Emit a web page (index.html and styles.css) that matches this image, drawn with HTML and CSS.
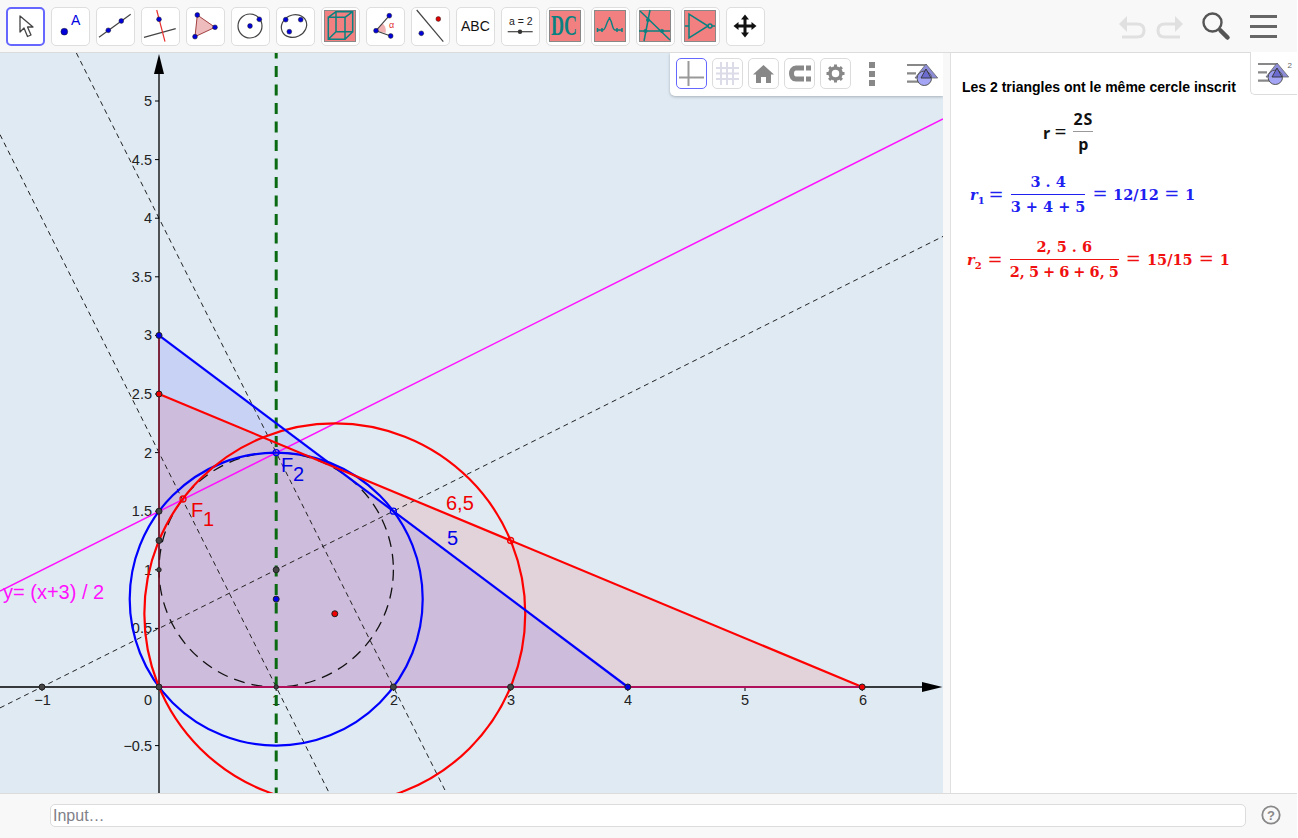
FILE: index.html
```html
<!DOCTYPE html>
<html lang="fr">
<head>
<meta charset="utf-8">
<title>Les 2 triangles</title>
<link rel="stylesheet" href="styles.css">
</head>
<body>
<svg class="defs" width="0" height="0" aria-hidden="true">
  <symbol id="stylebar" viewBox="0 0 32 23">
    <path d="M0 2h20M0 10.3h9M0 18.6h12" stroke="#888" stroke-width="2.2" fill="none"/>
    <path d="M19 1 30.7 15H8z" fill="#8c8cd8" stroke="#666" stroke-width=".8"/>
    <circle cx="17.3" cy="15.3" r="7.2" fill="#9a9cf4" fill-opacity=".9" stroke="#555" stroke-width="1"/>
    <path d="M19 6 14 15H24z" fill="#6c6cd0" stroke="#333" stroke-width=".9"/>
  </symbol>
</svg>
<div class="app">
  <header class="toolbar">
    <div class="tools">
      <button class="tool active"><svg viewBox="0 0 37 37"><path d="M13 8V24L17 20 20.500 28.500 24 27 20.500 19H26z" fill="#fff" stroke="#444" stroke-width="1.300" stroke-linejoin="round"/></svg></button>
      <button class="tool"><svg viewBox="0 0 37 37"><circle class="pt" cx="12.300" cy="23.700" r="3.400"/><text class="lbl-a" x="19" y="17">A</text></svg></button>
      <button class="tool"><svg viewBox="0 0 37 37"><path class="ln" d="M2 29.300 33.700 6.300"/><circle class="pt" cx="11.300" cy="22.300" r="2.400"/><circle class="pt" cx="24.300" cy="13" r="2.400"/></svg></button>
      <button class="tool"><svg viewBox="0 0 37 37"><path class="ln" d="M2 29.300 33.700 20.700"/><path class="ln red" d="M14.700 2 23 33.700"/><circle class="pt" cx="17" cy="11.300" r="2.400"/></svg></button>
      <button class="tool"><svg viewBox="0 0 37 37"><path d="M10.300 7 28 19.300 8 28.700z" fill="#eebcbc" stroke="#a04040" stroke-width="1"/><circle class="pt" cx="10.300" cy="7" r="2.400"/><circle class="pt" cx="28" cy="19.300" r="2.400"/><circle class="pt" cx="8" cy="28.700" r="2.400"/></svg></button>
      <button class="tool"><svg viewBox="0 0 37 37"><circle class="ln" cx="18" cy="18" r="12"/><circle class="pt" cx="18" cy="18" r="2.400"/><circle class="pt" cx="27.300" cy="11.300" r="2.400"/></svg></button>
      <button class="tool"><svg viewBox="0 0 37 37"><ellipse class="ln" cx="17" cy="18" rx="13" ry="11" transform="rotate(-25 17 18)"/><circle class="pt" cx="8.700" cy="11.700" r="2.400"/><circle class="pt" cx="23.700" cy="11.700" r="2.400"/><circle class="pt" cx="12.300" cy="23.700" r="2.400"/></svg></button>
      <button class="tool"><svg viewBox="0 0 37 37"><g transform="translate(2 2)"><rect class="custom" x=".5" y=".5" width="31" height="31"/><path class="teal thick" d="M4.300 7.300H21V29.300H4.300zM12 1.700H28.700V21.700H12zM4.300 7.300 12 1.700M21 7.300 28.700 1.700M21 29.300 28.700 21.700M4.300 29.300 12 21.700"/></g></svg></button>
      <button class="tool"><svg viewBox="0 0 37 37"><path d="M9 22.700 15.500 15.500C18 17.500 19.500 21 18.500 25z" fill="#f0b0b0"/><path class="ln" d="M22.300 7.700 9 22.700 23.700 28"/><circle class="pt" cx="9" cy="22.700" r="2.400"/><circle class="pt" cx="22.300" cy="7.700" r="2.400"/><circle class="pt" cx="23.700" cy="28" r="2.400"/><text class="alpha" x="22" y="20">α</text></svg></button>
      <button class="tool"><svg viewBox="0 0 37 37"><path class="ln" d="M4.700 2 31.300 33.700"/><circle class="pt redpt" cx="26.300" cy="11" r="2.400"/><circle class="pt" cx="9.300" cy="25.300" r="2.400"/></svg></button>
      <button class="tool"><svg viewBox="0 0 37 37"><text class="abc" x="4" y="22.700">ABC</text></svg></button>
      <button class="tool"><svg viewBox="0 0 37 37"><text class="aeq" x="7" y="16.500">a = 2</text><path class="ln" d="M5.700 23.700H30.700"/><circle cx="18" cy="23.700" r="2.200" fill="#333"/></svg></button>
      <button class="tool"><svg viewBox="0 0 37 37"><g transform="translate(2 2)"><rect class="custom" x=".5" y=".5" width="31" height="31"/><text class="dc" transform="translate(2 25) scale(1 1.600)">DC</text></g></svg></button>
      <button class="tool"><svg viewBox="0 0 37 37"><g transform="translate(2 2)"><rect class="custom" x=".5" y=".5" width="31" height="31"/><path class="teal thick" d="M3 20H9C12 20 13 9 15.500 9S18 20 21 20H28"/><path class="teal thick" d="M3.500 18v4M8 18v4M23 18v4M28 18v4M15.500 7v3"/></g></svg></button>
      <button class="tool"><svg viewBox="0 0 37 37"><g transform="translate(2 2)"><rect class="custom" x=".5" y=".5" width="31" height="31"/><path class="teal thick" d="M1 1 31 30M11 0 5 31M0 21H31"/><circle class="tealdot" cx="9" cy="10" r="2"/><circle class="tealdot" cx="6.500" cy="21" r="2"/><circle class="tealdot" cx="23" cy="21" r="2"/></g></svg></button>
      <button class="tool"><svg viewBox="0 0 37 37"><g transform="translate(2 2)"><rect class="custom" x=".5" y=".5" width="31" height="31"/><path class="teal thick" d="M5 4V28L24 16zM1 16H5"/><circle class="teal thick" cx="26" cy="16" r="2"/><path class="teal thick" d="M28 16H31"/></g></svg></button>
      <button class="tool"><svg viewBox="0 0 37 37"><path d="M18 6.500 22 11.500H19.500V16.500H24.500V14L29.500 18 24.500 22V19.500H19.500V24.500H22L18 29.500 14 24.500H16.500V19.500H11.500V22L6.500 18 11.500 14V16.500H16.500V11.500H14z" fill="#111"/></svg></button>
    </div>
    <div class="actions">
      <svg class="act undo" viewBox="0 0 28 24"><path d="M7 9H19C24 9 26 12 26 15.500S24 22 19 22H4" fill="none" stroke="#e0e0e0" stroke-width="3"/><path d="M9 1V17L1 9z" fill="#e0e0e0"/></svg>
      <svg class="act redo" viewBox="0 0 28 24"><path d="M21 9H9C4 9 2 12 2 15.500S4 22 9 22H24" fill="none" stroke="#e0e0e0" stroke-width="3"/><path d="M19 1V17L27 9z" fill="#e0e0e0"/></svg>
      <svg class="act search" viewBox="0 0 30 30"><circle cx="11.500" cy="11.500" r="9" fill="none" stroke="#555" stroke-width="2.400"/><path d="M18.500 18.500 26 26" stroke="#555" stroke-width="2"/><path d="M19.500 19.500 26.500 26.500" stroke="#555" stroke-width="4.500" stroke-linecap="round"/></svg>
      <div class="burger"><span></span><span></span><span></span></div>
    </div>
  </header>

  <main class="workspace">
    <section class="graphics">
      <svg class="plot" viewBox="0 53 943 740" width="943" height="740">
        <path d="M159 335.400 627.800 687H159z" fill="#0000ff" fill-opacity=".1"/>
        <path d="M159 394 862.200 687H159z" fill="#ff0000" fill-opacity=".1"/>

        <g class="dash">
          <path d="M0 707.900 943 236.400"/>
          <path d="M76.400 53 446.400 793"/>
          <path d="M0 134.600 329.200 793"/>
        </g>
        <circle class="incircle" cx="276.200" cy="569.800" r="117.200"/>

        <path class="axis" d="M0 687H930M159 793V68"/>
        <path d="M942.500 687 922 682V692z" fill="#000"/>
        <path d="M159 54 154 74H164z" fill="#000"/>
        <path class="tick" d="M42 687v4M276.200 687v4M393.400 687v4M510.600 687v4M627.800 687v4M745 687v4M862.200 687v4M155 745.600h4M155 628.400h4M155 569.800h4M155 511.200h4M155 452.600h4M155 394h4M155 335.400h4M155 276.800h4M155 218.200h4M155 159.600h4M155 101h4"/>

        <g class="num end">
          <text x="152" y="106">5</text>
          <text x="152" y="165">4.5</text>
          <text x="152" y="223">4</text>
          <text x="152" y="282">3.5</text>
          <text x="152" y="340">3</text>
          <text x="152" y="399">2.5</text>
          <text x="152" y="458">2</text>
          <text x="152" y="516">1.5</text>
          <text x="152" y="575">1</text>
          <text x="152" y="633">0.5</text>
          <text x="152" y="751">−0.5</text>
          <text x="152" y="705">0</text>
        </g>
        <g class="num mid">
          <text x="42.500" y="705">−1</text>
          <text x="276" y="705">1</text>
          <text x="394" y="705">2</text>
          <text x="511" y="705">3</text>
          <text x="628" y="705">4</text>
          <text x="745" y="705">5</text>
          <text x="863" y="705">6</text>
        </g>

        <path class="magenta" d="M0 591 943 119"/>
        <path class="green" d="M276.200 53V793"/>
        <circle class="bluec" cx="276.200" cy="599.100" r="146.500"/>
        <circle class="redc" cx="334.800" cy="613.750" r="190.450"/>
        <path class="blue-edge" d="M159 335.400 627.800 687"/>
        <path class="red-edge" d="M159 394 862.200 687"/>
        <path class="side" d="M159 335.400V687"/>
        <path class="base" d="M159 687H862.200"/>

        <circle class="gp" cx="42" cy="687" r="3"/>
        <circle class="gp" cx="159" cy="687" r="3"/>
        <circle class="gp" cx="393.400" cy="687" r="3"/>
        <circle class="gp" cx="510.600" cy="687" r="3"/>
        <circle class="gp small" cx="276.200" cy="687" r="2.200"/>
        <circle class="gp" cx="159" cy="511.200" r="3"/>
        <circle class="gp" cx="159" cy="540.500" r="3"/>
        <circle class="gp small" cx="159" cy="569.800" r="2.200"/>
        <circle class="gp" cx="276.200" cy="569.800" r="3"/>
        <circle class="bp" cx="159" cy="335.400" r="3"/>
        <circle class="bp" cx="627.800" cy="687" r="3"/>
        <circle class="bp" cx="276.200" cy="599.100" r="3"/>
        <circle class="rp" cx="159" cy="394" r="3"/>
        <circle class="rp" cx="862.200" cy="687" r="3"/>
        <circle class="rp" cx="334.800" cy="613.750" r="3"/>
        <circle class="open-r" cx="183" cy="499" r="3"/>
        <circle class="open-r" cx="510.600" cy="540.500" r="3"/>
        <circle class="open-b" cx="276.200" cy="452.600" r="3"/>
        <circle class="open-b" cx="393.400" cy="511.200" r="3"/>

        <text class="big fr" x="191" y="516.500">F</text>
        <text class="big fr" x="203" y="526">1</text>
        <text class="big fb" x="281" y="471.500">F</text>
        <text class="big fb" x="293" y="481">2</text>
        <text class="seg fr" x="446" y="510">6,5</text>
        <text class="seg fb" x="447" y="545">5</text>
        <text class="seg fm" x="3" y="599">y= (x+3) / 2</text>
      </svg>

      <div class="stylebar">
        <button class="sb on"><svg viewBox="0 0 29 29"><path d="M11.500 2V27M2 18.500H27" stroke="#999" stroke-width="2" fill="none"/></svg></button>
        <button class="sb"><svg viewBox="0 0 29 29"><path d="M3 9H26M3 14.500H26M3 20H26M8 3V26M14 3V26M20 3V26" stroke="#dcdce8" stroke-width="2" fill="none"/></svg></button>
        <button class="sb"><svg viewBox="0 0 29 29"><path d="M14.500 6 25 15.500H22V24H17V18H12V24H7V15.500H4z" fill="#888"/></svg></button>
        <button class="sb"><svg viewBox="0 0 29 29"><path d="M19 9H11C8 9 6.500 11.500 6.500 14.500S8 20 11 20H19" fill="none" stroke="#888" stroke-width="5"/><path d="M21 6.500h5v5h-5zM21 17.500h5v5h-5z" fill="#888"/></svg></button>
        <button class="sb"><svg viewBox="0 0 29 29"><circle cx="14.500" cy="14.500" r="5.500" fill="none" stroke="#888" stroke-width="3.500"/><path d="M14.500 5.500V9M14.500 20V23.500M5.500 14.500H9M20 14.500H23.500M8.100 8.100 10.600 10.600M18.400 18.400 20.900 20.900M8.100 20.900 10.600 18.400M18.400 10.600 20.900 8.100" stroke="#888" stroke-width="3"/></svg></button>
        <div class="dots"><span></span><span></span><span></span></div>
        <svg class="stylebar-icon"><use href="#stylebar"/></svg>
      </div>
    </section>
    <div class="splitter"></div>
    <aside class="panel">
      <button class="panel-style"><svg class="stylebar-icon"><use href="#stylebar"/></svg><span class="sup">2</span></button>
      <h1 class="title">Les 2 triangles ont le même cercle inscrit</h1>
      <div class="formula f-black">
        <span>r <span class="eq thin">=</span></span>
        <span class="frac"><span class="n">2S</span><span class="d">p</span></span>
      </div>
      <div class="formula f-blue">
        <span class="mi">r<sub>1</sub></span><span class="eq">=</span>
        <span class="frac"><span class="n">3 . 4</span><span class="d">3 + 4 + 5</span></span>
        <span class="res"><span class="eq">=</span> 12/12 <span class="eq">=</span> 1</span>
      </div>
      <div class="formula f-red">
        <span class="mi">r<sub>2</sub></span><span class="eq">=</span>
        <span class="frac"><span class="n">2, 5 . 6</span><span class="d">2, 5 + 6 + 6, 5</span></span>
        <span class="res"><span class="eq">=</span> 15/15 <span class="eq">=</span> 1</span>
      </div>
    </aside>
  </main>

  <footer class="inputbar">
    <input class="input" type="text" placeholder="Input…">
    <svg class="help" viewBox="0 0 20 20"><circle cx="10" cy="10" r="8.700" fill="none" stroke="#888" stroke-width="1.800"/><text class="q" x="10" y="14.500">?</text></svg>
  </footer>
</div>
</body>
</html>
```

FILE: styles.css
```css
* { box-sizing: border-box; }
html, body { margin: 0; padding: 0; background: #fff; }
body { font-family: "Liberation Sans", Arial, sans-serif; overflow: hidden; }
.defs { position: absolute; }
.app { width: 1297px; height: 838px; display: flex; flex-direction: column; }

.toolbar { height: 53px; flex: none; display: flex; justify-content: space-between; background: #f8f8f8; border-bottom: 1px solid #dcdcdc; }
.tools { display: flex; gap: 6px; padding: 7px 0 0 6px; }
.tool { width: 39px; height: 39px; padding: 0; border: 1px solid #dedede; border-radius: 5px; background: #fff; display: block; }
.tool svg { width: 37px; height: 37px; display: block; }
.tool.active { border: 2px solid #6667ff; }
.tool.active svg { margin: -1px; }
.pt { fill: #0000d8; stroke: #222; stroke-width: .5; }
.redpt { fill: #e00000; }
.ln { fill: none; stroke: #444; stroke-width: 1.2; }
.ln.red { stroke: #e83030; }
.lbl-a { font-size: 14px; fill: #0000e0; }
.alpha { font-size: 9px; fill: #e03030; }
.abc { font-size: 14px; fill: #111; }
.aeq { font-size: 10.500px; fill: #222; }
.custom { fill: #f28080; stroke: #888; }
.teal { fill: none; stroke: #0a8080; stroke-width: 1; }
.teal.thick { stroke-width: 1.500; }
.tealdot { fill: #0a8080; }
.dc { font-family: "Liberation Serif", serif; font-weight: bold; font-size: 18px; fill: #0a8080; }

.actions { position: relative; display: flex; align-items: flex-start; padding: 0 20px 0 0; }
.act { display: block; }
.undo { width: 28px; height: 24px; margin-top: 15px; }
.redo { width: 28px; height: 24px; margin: 15px 0 0 10px; }
.search { width: 30px; height: 30px; margin: 11px 0 0 17px; }
.burger { width: 27px; margin: 15px 0 0 19px; display: flex; flex-direction: column; gap: 7px; }
.burger span { height: 3px; background: #666; }

.workspace { flex: 1; min-height: 0; display: flex; }
.graphics { position: relative; width: 943px; flex: none; background: #dfeaf3; overflow: hidden; }
.plot { display: block; }
.dash path { fill: none; stroke: #222; stroke-width: 1; stroke-dasharray: 5 4; }
.incircle { fill: none; stroke: #111; stroke-width: 1.300; stroke-dasharray: 11 7; }
.axis { fill: none; stroke: #000; stroke-width: 1.300; }
.tick { fill: none; stroke: #000; stroke-width: 1; }
.num text { font-size: 14.500px; fill: #222; }
.end { text-anchor: end; }
.mid { text-anchor: middle; }
.magenta { fill: none; stroke: #ff10ff; stroke-width: 1.500; }
.green { fill: none; stroke: #0a6a12; stroke-width: 3; stroke-dasharray: 11 7.500; stroke-dashoffset: -13; }
.bluec { fill: none; stroke: #0000ff; stroke-width: 2.200; }
.redc { fill: none; stroke: #ff0000; stroke-width: 2.200; }
.blue-edge { fill: none; stroke: #0000ff; stroke-width: 2.200; }
.red-edge { fill: none; stroke: #ff0000; stroke-width: 2.200; }
.side { fill: none; stroke: #a01030; stroke-width: 1.200; }
.base { fill: none; stroke: #b0105a; stroke-width: 1.800; }
.gp { fill: #444; stroke: #222; stroke-width: 1; }
.bp { fill: #0000e8; stroke: #222; stroke-width: 1; }
.rp { fill: #f00000; stroke: #222; stroke-width: 1; }
.open-r { fill: none; stroke: #f00000; stroke-width: 1.300; }
.open-b { fill: none; stroke: #0000f0; stroke-width: 1.300; }
.big { font-size: 20px; }
.seg { font-size: 20px; }
.fr { fill: #f00000; }
.fb { fill: #0000e8; }
.fm { fill: #ff10ff; }

.stylebar { position: absolute; top: 0; right: 0; width: 273px; height: 43px; background: #fff; border-bottom-left-radius: 5px; box-shadow: 0 1px 3px rgba(0,0,0,.25); display: flex; align-items: flex-start; gap: 5px; padding: 5px 0 0 6px; }
.sb { width: 31px; height: 31px; padding: 0; border: 1px solid #dcdcdc; border-radius: 5px; background: #fff; }
.sb svg { display: block; width: 29px; height: 29px; }
.sb.on { border-color: #6667ff; }
.dots { display: flex; flex-direction: column; gap: 3px; margin: 4px 0 0 13px; }
.dots span { width: 6px; height: 6px; background: #888; }
.stylebar-icon { display: block; width: 32px; height: 23px; }
.stylebar > .stylebar-icon { margin: 5px 0 0 27px; }

.splitter { width: 8px; flex: none; background: #f8f8f8; border-right: 1px solid #e0e0e0; }
.panel { position: relative; flex: 1; background: #fff; padding: 26px 0 0 11px; }
.panel-style { position: absolute; top: -1px; right: 0; width: 47px; height: 43px; padding: 10px 0 0 7px; display: flex; align-items: flex-start; background: #fff; border: 1px solid #dcdcdc; border-width: 0 0 1px 1px; border-bottom-left-radius: 5px; }
.sup { position: absolute; top: 9px; right: 5px; font-size: 8px; color: #666; }
.title { margin: 0; font-size: 14px; line-height: 16px; font-weight: bold; color: #000; }
.formula { display: flex; align-items: center; font-family: "DejaVu Serif", serif; font-weight: bold; font-size: 14.500px; line-height: 20px; white-space: pre; }
.formula > span { display: block; }
.eq { font-size: 18px; font-weight: normal; line-height: 1; }
.eq.thin { font-size: 21px; }
.res { word-spacing: .5px; }
.frac { display: flex !important; flex-direction: column; align-items: stretch; text-align: center; margin: 0 7px; }
.frac .n { line-height: 20px; border-bottom: 1px solid currentColor; padding-bottom: 2px; }
.frac .d { line-height: 20px; padding-top: 2px; }
.mi { font-style: italic; margin-right: 4px; }
.mi sub { font-size: 10px; font-style: normal; line-height: 0; }
.f-black { margin: 14px 0 0 81px; font-family: "Open Sans", sans-serif; font-size: 16px; color: #111; }
.f-black .frac .n { border-bottom-color: #999; letter-spacing: 1px; }
.f-blue { margin: 18px 0 0 8px; color: #2020f0; }
.f-red { margin: 20px 0 0 5px; color: #f01010; }
.f-red .mi { margin-right: 6px; }
.f-red .res { word-spacing: 1px; }
.f-red .frac .d { word-spacing: -1px; }

.inputbar { height: 45px; flex: none; background: #f8f8f8; border-top: 1px solid #dcdcdc; display: flex; align-items: flex-start; padding: 10px 0 0 50px; }
.input { width: 1196px; height: 23px; padding: 0 2px; border: 1px solid #dcdcdc; border-radius: 5px; background: #fff; font: 16px "Liberation Sans", sans-serif; outline: none; }
.input::placeholder { color: #808088; opacity: 1; }
.help { width: 20px; height: 20px; margin: 1px 0 0 15px; display: block; }
.q { font: bold 13px "Liberation Sans", sans-serif; fill: #888; text-anchor: middle; }
```
